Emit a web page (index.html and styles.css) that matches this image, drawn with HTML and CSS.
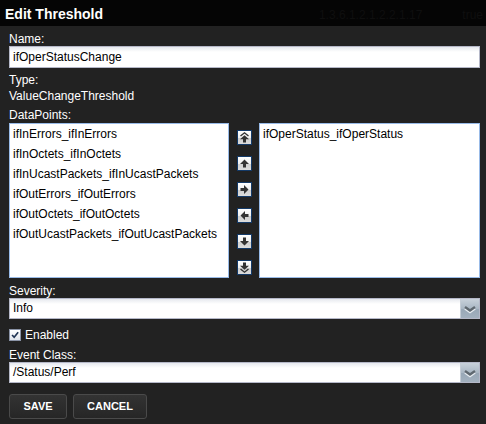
FILE: index.html
```html
<!DOCTYPE html>
<html>
<head>
<meta charset="utf-8">
<link rel="stylesheet" href="styles.css">
</head>
<body>
<div class="header">
  <span class="title">Edit Threshold</span>
  <span class="ghost ghost-oid">1.3.6.1.2.1.2.2.1.17</span>
  <span class="ghost ghost-true">true</span>
</div>
<div class="form">
  <div class="label">Name:</div>
  <div class="field">ifOperStatusChange</div>
  <div class="label-16 type-label">Type:</div>
  <div class="label-16">ValueChangeThreshold</div>
  <div class="label-16 dp-label">DataPoints:</div>
  <div class="lists">
    <div class="list list-left">
      <div class="list-item">ifInErrors_ifInErrors</div>
      <div class="list-item">ifInOctets_ifInOctets</div>
      <div class="list-item">ifInUcastPackets_ifInUcastPackets</div>
      <div class="list-item">ifOutErrors_ifOutErrors</div>
      <div class="list-item">ifOutOctets_ifOutOctets</div>
      <div class="list-item">ifOutUcastPackets_ifOutUcastPackets</div>
    </div>
    <div class="mover">
      <div class="mbtn"><svg width="13" height="13" viewBox="0 0 13 13"><polyline points="2.5,5 6.5,1.8 10.5,5" fill="none" stroke="#333" stroke-width="1.4"/><polygon points="6.5,4.3 11,8.3 8,8.3 8,11.5 5,11.5 5,8.3 2,8.3" fill="#333"/></svg></div>
      <div class="mbtn"><svg width="13" height="13" viewBox="0 0 13 13"><polygon points="6.5,2.5 11,7 8,7 8,10.5 5,10.5 5,7 2,7" fill="#333"/></svg></div>
      <div class="mbtn"><svg width="13" height="13" viewBox="0 0 13 13"><polygon points="10.5,6.5 6,2 6,5 2.5,5 2.5,8 6,8 6,11" fill="#333"/></svg></div>
      <div class="mbtn"><svg width="13" height="13" viewBox="0 0 13 13"><polygon points="2.5,6.5 7,2 7,5 10.5,5 10.5,8 7,8 7,11" fill="#333"/></svg></div>
      <div class="mbtn"><svg width="13" height="13" viewBox="0 0 13 13"><polygon points="6.5,10.5 11,6 8,6 8,2.5 5,2.5 5,6 2,6" fill="#333"/></svg></div>
      <div class="mbtn"><svg width="13" height="13" viewBox="0 0 13 13"><polygon points="6.5,8.7 11,4.7 8,4.7 8,1.5 5,1.5 5,4.7 2,4.7" fill="#333"/><polyline points="2.5,8 6.5,11.2 10.5,8" fill="none" stroke="#333" stroke-width="1.4"/></svg></div>
    </div>
    <div class="list list-right">
      <div class="list-item">ifOperStatus_ifOperStatus</div>
    </div>
  </div>
  <div class="label sev-label">Severity:</div>
  <div class="combo">
    <div class="combo-text">Info</div>
    <div class="combo-trigger"><svg width="18" height="19" viewBox="0 0 18 19"><polyline points="4,9.5 9,13 14,9.5" fill="none" stroke="#e8edf2" stroke-width="2.4"/><polyline points="4,8 9,11.5 14,8" fill="none" stroke="#5f6870" stroke-width="2.4"/></svg></div>
  </div>
  <div class="check-row">
    <span class="checkbox"><svg width="12" height="12" viewBox="0 0 12 12"><polyline points="2.5,6 5,8.8 9.8,2.8" fill="none" stroke="#1f3352" stroke-width="2"/></svg></span>
    <span>Enabled</span>
  </div>
  <div class="label ev-label">Event Class:</div>
  <div class="combo">
    <div class="combo-text">/Status/Perf</div>
    <div class="combo-trigger"><svg width="18" height="19" viewBox="0 0 18 19"><polyline points="4,9.5 9,13 14,9.5" fill="none" stroke="#e8edf2" stroke-width="2.4"/><polyline points="4,8 9,11.5 14,8" fill="none" stroke="#5f6870" stroke-width="2.4"/></svg></div>
  </div>
  <div class="actions">
    <div class="btn btn-save">SAVE</div>
    <div class="btn btn-cancel">CANCEL</div>
  </div>
</div>
</body>
</html>
```

FILE: styles.css
```css
html, body {
  margin: 0;
  padding: 0;
}
body {
  width: 486px;
  height: 424px;
  overflow: hidden;
  background: #222222;
  font-family: "Liberation Sans", Arial, sans-serif;
  font-size: 12px;
  color: #ffffff;
}
.header {
  height: 26px;
  box-sizing: border-box;
  background: #050505;
  padding: 3px 3px 0 5px;
  display: flex;
  align-items: baseline;
  line-height: 23px;
  overflow: hidden;
  white-space: nowrap;
}
.title {
  flex-shrink: 0;
  font-size: 14px;
  font-weight: bold;
  color: #ffffff;
}
.ghost {
  flex-shrink: 0;
  font-size: 12px;
  color: #0f0f0f;
}
.ghost-oid {
  margin-left: auto;
}
.ghost-true {
  margin-left: 40px;
}
.form {
  padding: 6px 6px 0 9px;
}
.label {
  line-height: 14px;
}
.label-16 {
  line-height: 16px;
}
.type-label {
  margin-top: 4px;
}
.dp-label {
  margin-top: 3px;
}
.field {
  height: 22px;
  box-sizing: border-box;
  border: 1px solid #b5b8c8;
  background: linear-gradient(#e6e9ee, #ffffff 5px);
  color: #000;
  padding-left: 3px;
  line-height: 20px;
}
.lists {
  display: flex;
  height: 155px;
}
.list {
  box-sizing: border-box;
  border: 1px solid #99bbe8;
  background: #ffffff;
  color: #000;
}
.list-left {
  width: 220px;
}
.list-right {
  flex: 1;
}
.list-item {
  height: 20px;
  line-height: 20px;
  padding-left: 3px;
  white-space: nowrap;
}
.mover {
  width: 30px;
  box-sizing: border-box;
  padding: 7px 0 0 8px;
  display: flex;
  flex-direction: column;
  gap: 11px;
}
.mbtn {
  width: 15px;
  height: 15px;
  box-sizing: border-box;
  border: 1px solid #143a68;
  background: linear-gradient(#ffffff, #eeeeee 55%, #cfcfcf 56%, #dcdcdc);
  display: flex;
}
.mbtn svg {
  display: block;
}
.sev-label {
  margin-top: 6px;
}
.combo {
  height: 21px;
  box-sizing: border-box;
  border: 1px solid #b5b8c8;
  display: flex;
}
.combo-text {
  flex: 1;
  background: linear-gradient(#e6e9ee, #ffffff 5px);
  color: #000;
  padding-left: 3px;
  line-height: 19px;
}
.combo-trigger {
  width: 18px;
  border-left: 1px solid #c5cdd6;
  background: linear-gradient(#c8d1da, #aab7c4 50%, #98a7b6 51%, #a3b1bf);
}
.combo-trigger svg {
  display: block;
}
.check-row {
  margin-top: 9px;
  height: 14px;
  line-height: 14px;
  display: flex;
  align-items: center;
  gap: 4px;
  font-size: 12px;
}
.checkbox {
  width: 12px;
  height: 12px;
  box-sizing: border-box;
  border: 1px solid #8a93a6;
  background: linear-gradient(#ffffff, #dfe3ea);
  display: flex;
  align-items: center;
  justify-content: center;
}
.checkbox svg {
  display: block;
}
.ev-label {
  margin-top: 6px;
}
.actions {
  margin-top: 11px;
  display: flex;
  gap: 6px;
}
.btn {
  height: 25px;
  box-sizing: border-box;
  border: 1px solid #4a4a4a;
  border-radius: 3px;
  background: linear-gradient(#333333, #262626);
  color: #ffffff;
  font-size: 11px;
  font-weight: bold;
  line-height: 23px;
  text-align: center;
}
.btn-save {
  width: 58px;
}
.btn-cancel {
  width: 74px;
}
```
